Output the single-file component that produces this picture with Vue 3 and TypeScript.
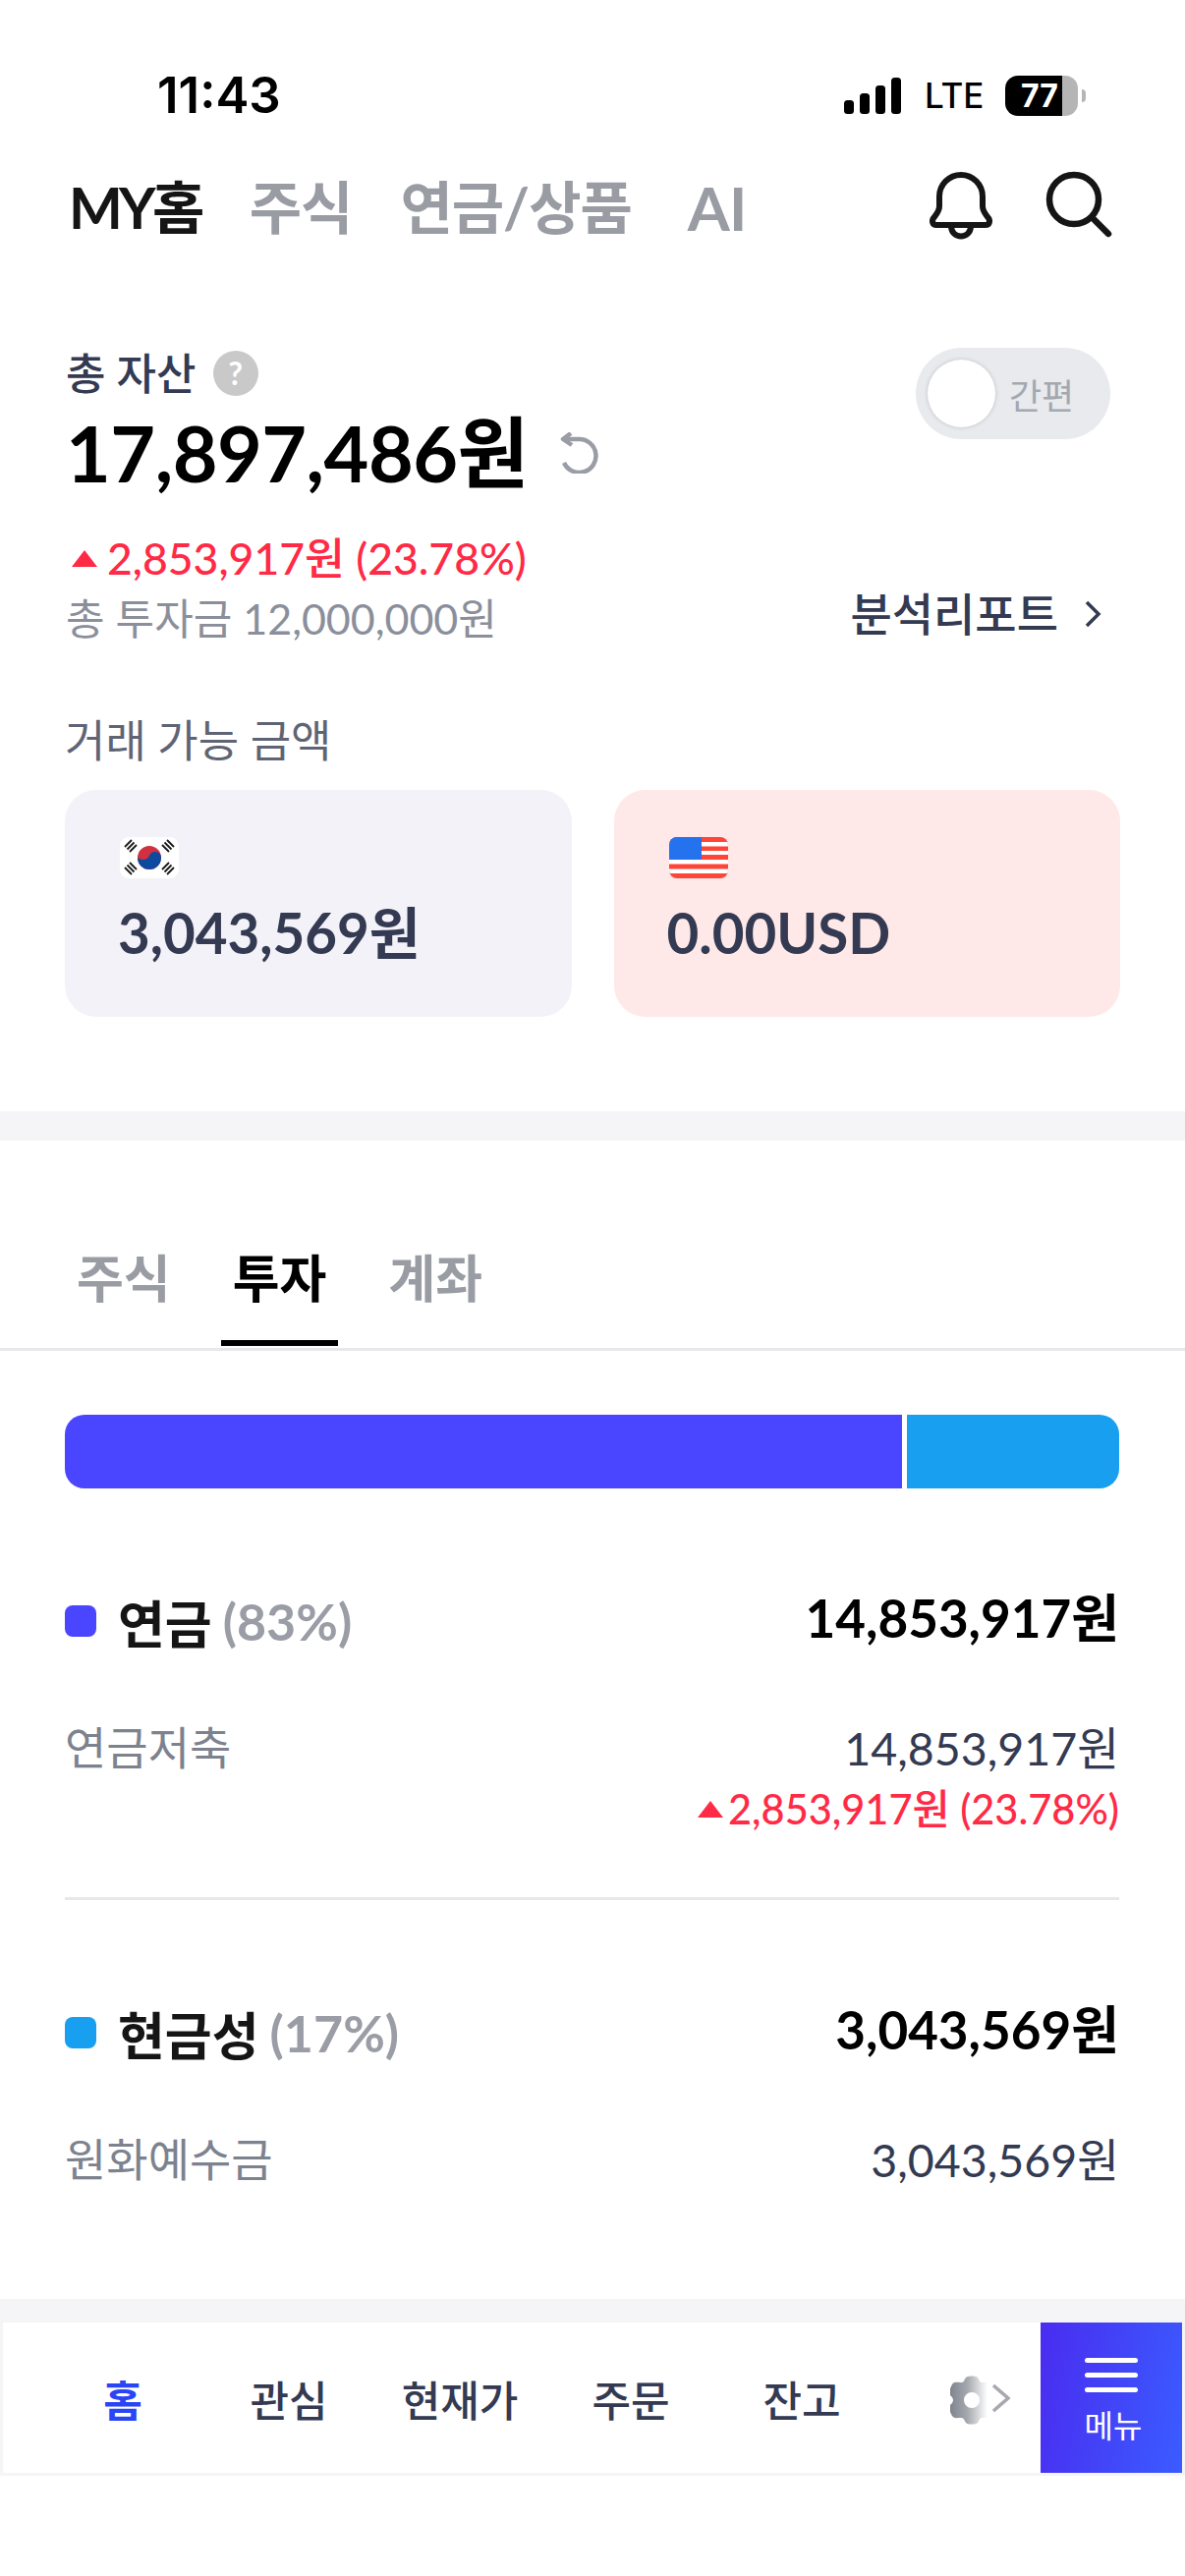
<template>
  <div class="page">
    <div class="status">
      <span class="time">11:43</span>
      <div class="status-right">
        <svg class="signal" width="58" height="38" viewBox="0 0 58 38">
          <rect x="0" y="23" width="10" height="14" rx="3.5" />
          <rect x="16" y="16" width="10" height="21" rx="3.5" />
          <rect x="32" y="8" width="10" height="29" rx="3.5" />
          <rect x="48" y="0" width="10" height="37" rx="3.5" />
        </svg>
        <span class="lte">LTE</span>
        <div class="battery"><span>77</span></div>
        <span class="nub"></span>
      </div>
    </div>

    <header class="top">
      <nav class="top-tabs">
        <span v-for="(t, i) in topTabs" :key="t" class="top-tab" :class="{ on: i === 0 }">{{ t }}</span>
      </nav>
      <div class="top-icons">
        <svg width="66" height="70" viewBox="0 0 66 70" fill="none" stroke="#151515" stroke-width="6" stroke-linejoin="round">
          <path d="M11 36V26a22 22 0 0 1 44 0v10c0 5 3 8 6 12 2 3 1 7-3 7H8c-4 0-5-4-3-7 3-4 6-7 6-12z" />
          <path d="M23 56c0 14 20 14 20 0" />
        </svg>
        <svg width="68" height="68" viewBox="0 0 68 68" fill="none" stroke="#151515" stroke-width="6.5" stroke-linecap="round">
          <circle cx="29" cy="29" r="25" />
          <path d="M48 48l16 16" />
        </svg>
      </div>
    </header>

    <section class="summary">
      <div class="summary-main">
        <div class="total-label">
          <span>총 자산</span>
          <span class="help">?</span>
        </div>
        <div class="total-row">
          <span class="total">17,897,486원</span>
          <svg width="42" height="42" viewBox="0 0 42 42" fill="none" stroke="#9a9da6" stroke-width="4.5">
            <path d="M12 1L4 7l9 6" stroke-linejoin="round" />
            <path d="M5 7h15a17 17 0 1 1-15 24" />
          </svg>
        </div>
        <div class="gain">
          <i class="tri"></i>
          <span>2,853,917원 (23.78%)</span>
        </div>
        <div class="invest">총 투자금 12,000,000원</div>
      </div>
      <div class="summary-side">
        <div class="toggle">
          <span class="knob"></span>
          <span class="toggle-text">간편</span>
        </div>
        <div class="report">
          <span>분석리포트</span>
          <svg width="20" height="30" viewBox="0 0 20 30" fill="none" stroke="#333a52" stroke-width="3.500">
            <path d="M4 3l12 12L4 27" />
          </svg>
        </div>
      </div>
    </section>

    <section class="balance">
      <div class="balance-title">거래 가능 금액</div>
      <div class="cards">
        <div class="card">
          <svg class="flag" width="60" height="42" viewBox="0 0 60 42">
            <rect width="60" height="42" rx="9" fill="#fff" />
            <circle cx="30" cy="21" r="12" fill="#d0303f" />
            <path d="M18 21a12 12 0 0 0 24 0c0-3.500-2.500-6-6-6s-5 2-6 4-3 4-6 4-4-1-6-2z" fill="#0b4a9e" />
            <g stroke="#1a1a1a" stroke-width="1.800">
              <path d="M5 11l7-7M7.500 13.500l7-7M10 16l7-7" transform="translate(0 -1)" />
              <path d="M43 9l7 7M45.500 6.500l7 7M48 4l7 7" transform="translate(0 -1)" />
              <path d="M5 31l7 7M7.500 28.500l7 7M10 26l7 7" />
              <path d="M43 33l7-7M45.500 35.500l7-7M48 38l7-7" />
            </g>
          </svg>
          <div class="card-value">3,043,569원</div>
        </div>
        <div class="card usd">
          <svg class="flag" width="60" height="42" viewBox="0 0 60 42">
            <clipPath id="flagClip"><rect width="60" height="42" rx="8" /></clipPath>
            <g clip-path="url(#flagClip)">
              <rect width="60" height="42" fill="#ff4438" />
              <path d="M0 5h60v4.500H0zM0 14h60v4H0zM0 23h60v4.500H0zM0 32.500h60v4.500H0z" fill="#fff" />
              <rect width="33" height="23" fill="#2472ee" />
            </g>
          </svg>
          <div class="card-value">0.00USD</div>
        </div>
      </div>
    </section>

    <div class="band"></div>

    <div class="tabs">
      <span v-for="(t, i) in tabs" :key="t" class="tab" :class="{ on: i === 1 }">{{ t }}</span>
    </div>

    <section class="portfolio">
      <div class="bar">
        <span class="bar-a"></span>
        <span class="bar-b"></span>
      </div>

      <div class="group">
        <div class="group-head">
          <span class="dot"></span>
          <span class="group-name">연금</span>
          <span class="group-pct">(83%)</span>
          <span class="group-amt">14,853,917원</span>
        </div>
        <div class="item">
          <span class="item-name">연금저축</span>
          <div class="item-values">
            <div class="item-amt">14,853,917원</div>
            <div class="gain small">
              <i class="tri"></i>
              <span>2,853,917원 (23.78%)</span>
            </div>
          </div>
        </div>
      </div>

      <div class="group second">
        <div class="group-head">
          <span class="dot cyan"></span>
          <span class="group-name">현금성</span>
          <span class="group-pct">(17%)</span>
          <span class="group-amt">3,043,569원</span>
        </div>
        <div class="item">
          <span class="item-name">원화예수금</span>
          <div class="item-values">
            <div class="item-amt">3,043,569원</div>
          </div>
        </div>
      </div>
    </section>

    <div class="dock">
      <div class="dock-inner">
        <div class="dock-items">
          <span v-for="(n, i) in dock" :key="n" class="dock-item" :class="{ on: i === 0 }">{{ n }}</span>
          <div class="dock-gear">
            <svg width="66" height="50" viewBox="0 0 66 50">
              <defs>
                <linearGradient id="gearFill" x1="0" x2="1" y1="0" y2="0">
                  <stop offset="0" stop-color="#7d828d" />
                  <stop offset="0.4" stop-color="#a5a8ae" />
                  <stop offset="0.85" stop-color="#ffffff" />
                </linearGradient>
              </defs>
              <path
                fill="url(#gearFill)"
                fill-rule="evenodd"
                d="M16 2c2-2 10-2 12 0 2 3 2 5 5 5 4 0 7-1 9 2 2 4 4 8 2 11-2 2-3 3-3 5s1 3 3 5c2 3 0 7-2 11-2 3-5 2-9 2-3 0-3 2-5 5-2 2-10 2-12 0-2-3-2-5-5-5-4 0-7 1-9-2-2-4-4-8-2-11 2-2 3-3 3-5s-1-3-3-5c-2-3 0-7 2-11 2-3 5-2 9-2 3 0 3-2 5-5zM22 17a8 8 0 1 0 0 16 8 8 0 0 0 0-16z"
              />
              <path d="M44 10l15 13-15 13" fill="none" stroke="#a7a9ae" stroke-width="3.500" />
            </svg>
          </div>
        </div>
        <div class="menu">
          <div class="burger"><i></i><i></i><i></i></div>
          <span>메뉴</span>
        </div>
      </div>
    </div>
  </div>
</template>

<script setup lang="ts">
const topTabs = ["MY홈", "주식", "연금/상품", "AI"];
const tabs = ["주식", "투자", "계좌"];
const dock = ["홈", "관심", "현재가", "주문", "잔고"];
</script>

<style>
html,
body {
  background: #fff;
}
</style>

<style scoped>
.page {
  width: 1206px;
  height: 2622px;
  overflow: hidden;
  background: #fff;
  font-family: Lato, "Noto Sans CJK KR", sans-serif;
  color: #333a52;
}

.status {
  height: 163px;
  padding: 77px 101px 0 160px;
  box-sizing: border-box;
  display: flex;
  justify-content: space-between;
  align-items: flex-start;
}
.time {
  font: 600 51px/40px Inter, sans-serif;
  color: #000;
}
.status-right {
  display: flex;
  align-items: center;
  height: 41px;
}
.signal {
  fill: #000;
  margin-right: 24px;
}
.lte {
  font: 500 35px/41px Inter, sans-serif;
  color: #000;
  margin-right: 23px;
  width: 59px;
}
.battery {
  width: 74px;
  height: 41px;
  border-radius: 13px;
  background: linear-gradient(90deg, #000 0 58px, #b5b5b5 58px);
  color: #fff;
  font: 700 32px/41px Inter, sans-serif;
  padding-left: 16px;
  box-sizing: border-box;
}
.nub {
  width: 4px;
  height: 13px;
  margin-left: 4px;
  background: #b5b5b5;
  border-radius: 0 8px 8px 0;
}

.top {
  height: 95px;
  padding: 0 74px 0 70px;
  display: flex;
  justify-content: space-between;
  align-items: center;
}
.top-tabs {
  display: flex;
  gap: 49px;
}
.top-tab {
  font-size: 58px;
  font-weight: 700;
  line-height: 70px;
  letter-spacing: -1px;
  color: #999ca3;
}
.top-tab:last-child {
  margin-left: 8px;
  font-size: 62px;
}
.top-tab.on {
  color: #151515;
  letter-spacing: -3.7px;
}
.top-icons {
  display: flex;
  gap: 53px;
  align-items: flex-start;
  margin-top: -3px;
}

.summary {
  padding: 94px 67px 0;
  display: flex;
  justify-content: space-between;
}
.total-label {
  display: flex;
  align-items: center;
  gap: 17px;
  font-size: 44px;
  font-weight: 500;
  line-height: 56px;
}
.help {
  width: 46px;
  height: 46px;
  border-radius: 50%;
  background: #c9c9c9;
  color: #fff;
  font-size: 32px;
  font-weight: 700;
  line-height: 46px;
  text-align: center;
}
.total-row {
  display: flex;
  align-items: center;
  gap: 31px;
  height: 92px;
  margin-top: 7px;
}
.total {
  font-size: 79px;
  font-weight: 700;
  color: #000;
  line-height: 92px;
  letter-spacing: -0.5px;
}
.gain {
  display: flex;
  align-items: center;
  gap: 10px;
  color: #ff2a46;
  font-size: 44.500px;
  font-weight: 500;
  line-height: 56px;
  margin-top: 33px;
}
.tri {
  width: 0;
  height: 0;
  border-left: 13px solid transparent;
  border-right: 13px solid transparent;
  border-bottom: 17px solid #ff2a46;
  margin-left: 6px;
}
.invest {
  margin-top: 6px;
  font-size: 43px;
  line-height: 56px;
  color: #8b8f9b;
}
.summary-side {
  display: flex;
  flex-direction: column;
  justify-content: space-between;
  align-items: flex-end;
  padding-right: 9px;
  height: 310px;
}
.toggle {
  width: 198px;
  height: 93px;
  margin-top: 2px;
  border-radius: 47px;
  background: #e8eaee;
  display: flex;
  align-items: center;
  padding-left: 12px;
  box-sizing: border-box;
}
.knob {
  width: 69px;
  height: 69px;
  border-radius: 50%;
  background: #fff;
  box-shadow: 0 0 4px rgba(0, 0, 0, 0.18);
}
.toggle-text {
  margin-left: 14px;
  font-size: 36px;
  color: #a4a8b0;
}
.report {
  display: flex;
  align-items: center;
  gap: 25px;
  font-size: 46px;
  font-weight: 500;
  line-height: 56px;
  margin-bottom: 9px;
  margin-right: 8px;
}

.balance {
  padding: 0 66px;
  margin-top: 64px;
}
.balance-title {
  font-size: 45px;
  line-height: 56px;
  color: #5f6475;
}
.cards {
  display: flex;
  gap: 43px;
  margin-top: 22px;
}
.card {
  flex: 1;
  height: 231px;
  background: #f3f2f8;
  border-radius: 32px;
  padding: 48px 0 0 56px;
  box-sizing: border-box;
}
.card.usd {
  background: #fee8e8;
}
.flag {
  display: block;
}
.card-value {
  margin-top: 21px;
  font-size: 56.500px;
  font-weight: 700;
  line-height: 68px;
  margin-left: -2px;
}

.band {
  height: 30px;
  margin-top: 96px;
  background: #f5f5f7;
}

.tabs {
  margin-top: 96px;
  height: 115px;
  padding: 0 0 0 66px;
  display: flex;
  gap: 39px;
  border-bottom: 3px solid #e8e8ec;
}
.tab {
  height: 113px;
  box-sizing: border-box;
  padding: 0 12px;
  font-size: 52px;
  font-weight: 700;
  line-height: 88px;
  color: #999ca3;
}
.tab.on {
  color: #000;
  border-bottom: 6px solid #000;
}

.portfolio {
  height: 965px;
  padding: 0 67px 0 66px;
  box-sizing: border-box;
}
.bar {
  padding-top: 65px;
  height: 75px;
  box-sizing: content-box;
  display: flex;
  gap: 5px;
}
.bar-a {
  width: 852px;
  background: #4a45ff;
  border-radius: 20px 0 0 20px;
}
.bar-b {
  flex: 1;
  background: #189ff0;
  border-radius: 0 20px 20px 0;
}
.group {
  margin-top: 102px;
  padding-bottom: 60px;
  border-bottom: 3px solid #e8e8ec;
}
.group.second {
  border-bottom: 0;
  margin-top: 102px;
}
.group-head {
  display: flex;
  align-items: center;
  height: 66px;
}
.dot {
  width: 32px;
  height: 32px;
  border-radius: 8px;
  background: #4a45ff;
  margin-right: 22px;
}
.dot.cyan {
  background: #189ff0;
}
.group-name {
  font-size: 52px;
  font-weight: 700;
  color: #151515;
}
.group-pct {
  margin-left: 11px;
  font-size: 52px;
  font-weight: 700;
  color: #9a9da6;
}
.group-amt {
  margin-left: auto;
  margin-top: -12px;
  font-size: 53px;
  font-weight: 700;
  color: #000;
}
.item {
  margin-top: 66px;
  display: flex;
  justify-content: space-between;
}
.item-name {
  font-size: 46px;
  line-height: 60px;
  color: #7d828f;
}
.item-values {
  text-align: right;
}
.item-amt {
  font-size: 46.500px;
  line-height: 60px;
}
.gain.small {
  justify-content: flex-end;
  gap: 5px;
  margin-top: 2px;
  font-size: 41.500px;
  line-height: 60px;
}
.gain.small .tri {
  margin-left: 0;
}

.dock {
  height: 180px;
  background: #f5f5f7;
  padding: 24px 3px 3px;
  box-sizing: border-box;
}
.dock-inner {
  display: flex;
  height: 153px;
  background: #fff;
}
.dock-items {
  flex: 1;
  display: flex;
  align-items: center;
  padding-left: 40px;
}
.dock-item {
  width: 174px;
  text-align: center;
  font-size: 43px;
  font-weight: 500;
}
.dock-item:first-child {
  width: 164px;
}
.dock-item.on {
  color: #2a45f5;
  font-weight: 700;
}
.dock-gear {
  margin: 4px 0 0 64px;
  display: flex;
}
.menu {
  width: 144px;
  background: linear-gradient(100deg, #4a2cf0, #3a5cff);
  color: #fff;
  display: flex;
  flex-direction: column;
  align-items: center;
  padding-top: 36px;
  box-sizing: border-box;
  font-size: 32px;
  line-height: 44px;
}
.menu span {
  padding-left: 4px;
}
.burger {
  display: flex;
  flex-direction: column;
  gap: 10px;
  margin-bottom: 12px;
}
.burger i {
  display: block;
  width: 54px;
  height: 5px;
  border-radius: 3px;
  background: #fff;
}
</style>
